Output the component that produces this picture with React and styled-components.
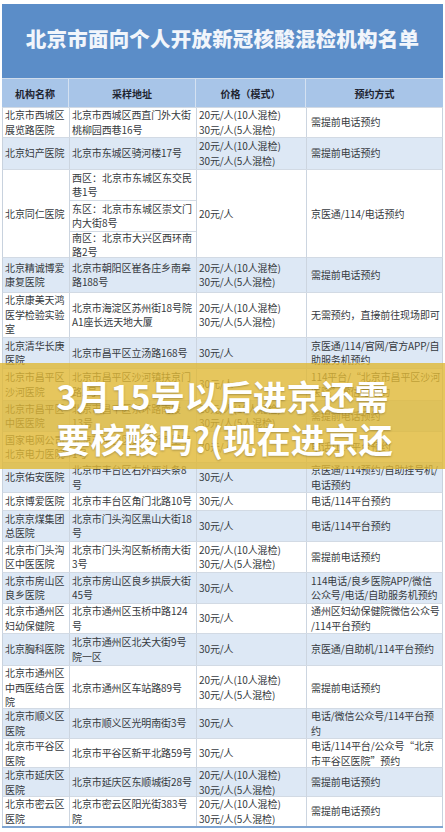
import React from 'react';
import styled, { createGlobalStyle } from 'styled-components';

const MIX = ['20元/人(10人混检)', '30元/人(5人混检)'].join('\n');
const PER = '30元/人';
const CALL = '需提前电话预约';

const rows = [
  { h: 30, name: '北京市西城区\n展览路医院', addr: '北京市西城区西直门外大街\n桃柳园西巷16号', price: MIX, book: CALL },
  { h: 32, name: '北京妇产医院', addr: '北京市东城区骑河楼17号', price: MIX, book: CALL },
  {
    h: 88,
    name: '北京同仁医院',
    addr: [
      { h: 30, text: '西区：北京市东城区东交民\n巷1号' },
      { h: 31, text: '东区：北京市东城区崇文门\n内大街8号' },
      { h: 27, text: '南区：北京市大兴区西环南\n路2号' },
    ],
    price: '20元/人',
    book: '京医通/114/电话预约',
  },
  { h: 35, name: '北京精诚博爱\n康复医院', addr: '北京市朝阳区崔各庄乡南皋\n路188号', price: MIX, book: CALL },
  { h: 45, name: '北京康美天鸿\n医学检验实验\n室', addr: '北京市海淀区苏州街18号院\nA1座长远天地大厦', price: MIX, book: '无需预约，直接前往现场即可' },
  { h: 31, name: '北京清华长庚\n医院', addr: '北京市昌平区立汤路168号', price: PER, book: '京医通/114/官网/官方APP/自\n助服务机预约' },
  { h: 32, name: '北京市昌平区\n沙河医院', addr: '北京市昌平区沙河镇扶京门\n路2号', price: PER, book: '114平台/“北京市昌平区沙河\n医院”微信号预约' },
  { h: 31, name: '北京市昌平区\n中医医院', addr: '北京市昌平区东环路南段\n13号', price: MIX, book: CALL },
  { h: 31, name: '国家电网公司\n北京电力医院', addr: '北京市丰台区太平桥西里甲\n1号', price: PER, book: '电话/114平台预约' },
  { h: 30, name: '北京佑安医院', addr: '北京市丰台区右外西头条8\n号', price: PER, book: '京医通/114预约/自助挂号机/\n电话预约' },
  { h: 18, name: '北京博爱医院', addr: '北京市丰台区角门北路10号', price: PER, book: '电话/114平台预约' },
  { h: 31, name: '北京京煤集团\n总医院', addr: '北京市门头沟区黑山大街18\n号', price: PER, book: '电话/114平台预约' },
  { h: 31, name: '北京市门头沟\n区中医医院', addr: '北京市门头沟区新桥南大街\n3号', price: MIX, book: CALL },
  { h: 31, name: '北京市房山区\n良乡医院', addr: '北京市房山区良乡拱辰大街\n45号', price: PER, book: '114电话/良乡医院APP/微信\n公众号/电话/自助服务机预约' },
  { h: 30, name: '北京市通州区\n妇幼保健院', addr: '北京市通州区玉桥中路124\n号', price: PER, book: '通州区妇幼保健院微信公众号\n/114平台预约' },
  { h: 32, name: '北京胸科医院', addr: '北京市通州区北关大街9号\n院一区', price: PER, book: '京医通/自助机/114平台预约' },
  { h: 43, name: '北京市通州区\n中西医结合医\n院', addr: '北京市通州区车站路89号', price: MIX, book: CALL },
  { h: 30, name: '北京市顺义区\n医院', addr: '北京市顺义区光明南街3号', price: PER, book: '电话/微信公众号/114平台预\n约' },
  { h: 29, name: '北京市平谷区\n医院', addr: '北京市平谷区新平北路59号', price: PER, book: '电话/114平台/公众号“北京\n市平谷区医院”预约' },
  { h: 29, name: '北京市延庆区\n医院', addr: '北京市延庆区东顺城街28号', price: MIX, book: CALL },
  { h: 30, name: '北京市密云区\n医院', addr: '北京市密云区阳光街383号\n院', price: MIX, book: CALL },
];

const bannerLines = ['3月15号以后进京还需', '要核酸吗?(现在进京还'];

export default function App() {
  return (
    <>
      <GlobalStyle />
      <Page>
        <Sheet>
          <TitleBar>
            <Title>北京市面向个人开放新冠核酸混检机构名单</Title>
          </TitleBar>
          <HeadRow>
            <HeadCell>机构名称</HeadCell>
            <HeadCell>采样地址</HeadCell>
            <HeadCell>价格（模式）</HeadCell>
            <HeadCell>预约方式</HeadCell>
          </HeadRow>
          {rows.map((row, i) => (
            <Row key={row.name} $h={row.h} $alt={i % 2 === 1}>
              <Cell>{row.name}</Cell>
              {Array.isArray(row.addr) ? (
                <SubStack>
                  {row.addr.map((sub) => (
                    <SubCell key={sub.text} $h={sub.h}>
                      {sub.text}
                    </SubCell>
                  ))}
                </SubStack>
              ) : (
                <Cell>{row.addr}</Cell>
              )}
              <Cell>{row.price}</Cell>
              <Cell $pad={4}>{row.book}</Cell>
            </Row>
          ))}
        </Sheet>
        <Banner>
          <BannerText>
            {bannerLines.map((line) => (
              <BannerLine key={line}>{line}</BannerLine>
            ))}
          </BannerText>
        </Banner>
      </Page>
    </>
  );
}

const GlobalStyle = createGlobalStyle`
  html, body {
    margin: 0;
    padding: 0;
    background: #ffffff;
  }
  body {
    font-family: 'Noto Sans CJK SC', 'Noto Sans', sans-serif;
  }
`;

const Page = styled.div`
  position: relative;
  width: 445px;
  padding: 4px 2px 0 2px;
  box-sizing: border-box;
`;

const Sheet = styled.div`
  width: 441px;
  border-bottom: 2px solid #7fa5d2;
  box-sizing: border-box;
`;

const TitleBar = styled.div`
  height: 74px;
  display: flex;
  align-items: center;
  justify-content: center;
  background: #5b8dc8;
`;

const Title = styled.div`
  color: #f1f5fb;
  font-size: 20.5px;
  font-weight: 900;
  letter-spacing: 0.2px;
  padding-bottom: 6px;
`;

const grid = `
  display: grid;
  grid-template-columns: 66px 127px 110px 1fr;
  box-sizing: border-box;
`;

const HeadRow = styled.div`
  ${grid}
  height: 29px;
  background: #a8c5e8;
  border-top: 1px solid #cfdcec;
`;

const HeadCell = styled.div`
  display: flex;
  align-items: center;
  justify-content: center;
  font-size: 10px;
  font-weight: 700;
  color: #1e2430;
  border-left: 1px solid #d4e1f1;

  &:first-child {
    border-left: none;
  }
`;

const Row = styled.div`
  ${grid}
  height: ${({ $h }) => $h}px;
  background: ${({ $alt }) => ($alt ? '#dde8f5' : '#ffffff')};
  border-top: 1px solid #d2dae4;
  border-left: 1px solid #c8d2de;
  border-right: 1px solid #c8d2de;
`;

const Cell = styled.div`
  display: flex;
  align-items: center;
  min-width: 0;
  padding: 0 0 0 ${({ $pad }) => $pad || 2}px;
  font-size: 10px;
  line-height: 14.5px;
  letter-spacing: -0.1px;
  color: #363a40;
  white-space: pre;
  border-left: 1px solid #ccd5e0;

  &:first-child {
    border-left: none;
  }
`;

const SubStack = styled.div`
  display: flex;
  flex-direction: column;
  border-left: 1px solid #ccd5e0;
`;

const SubCell = styled.div`
  display: flex;
  align-items: center;
  height: ${({ $h }) => $h}px;
  padding-left: 2px;
  font-size: 10px;
  line-height: 14.5px;
  color: #363a40;
  white-space: pre;
  box-sizing: border-box;
  border-top: 1px solid #d2dae4;

  &:first-child {
    border-top: none;
  }
`;

const Banner = styled.div`
  position: absolute;
  top: 363px;
  left: 0;
  right: 0;
  height: 106px;
  display: flex;
  align-items: center;
  justify-content: center;
  background: rgba(224, 184, 52, 0.8);
`;

const BannerText = styled.div`
  width: 332px;
  display: flex;
  flex-direction: column;
  padding-top: 2px;
`;

const BannerLine = styled.div`
  font-size: 34px;
  font-weight: 700;
  line-height: 43px;
  color: #ffffff;
  text-shadow: 0 1px 2px rgba(0, 0, 0, 0.25);
  white-space: nowrap;
`;
